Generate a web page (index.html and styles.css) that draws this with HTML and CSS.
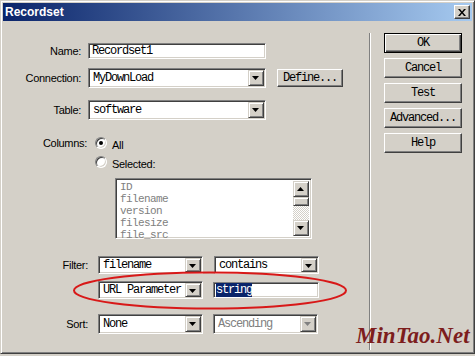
FILE: index.html
```html
<!DOCTYPE html>
<html lang="en">
<head>
    <meta charset="UTF-8">
    <title>Recordset</title>
    <link rel="stylesheet" href="styles.css">
</head>
<body>
    <div class="dialog">
        <div class="titlebar">
            <span class="title">Recordset</span>
            <span class="close">
                <svg width="8" height="7" viewBox="0 0 8 7"><path d="M0 0h2l2 2.5L6 0h2L5 3.5 8 7H6L4 4.5 2 7H0l3-3.5z" fill="#000"/></svg>
            </span>
        </div>

        <div class="content">
            <div class="main">
                <div class="row row-name">
                    <label class="lbl">Name:</label>
                    <div class="field text w-wide">Recordset1</div>
                </div>

                <div class="row row-conn">
                    <label class="lbl">Connection:</label>
                    <div class="field select w-wide">
                        <span class="select-text">MyDownLoad</span>
                        <span class="arrow"></span>
                    </div>
                    <button class="btn btn-define">Define...</button>
                </div>

                <div class="row row-table">
                    <label class="lbl">Table:</label>
                    <div class="field select w-wide">
                        <span class="select-text">software</span>
                        <span class="arrow"></span>
                    </div>
                </div>

                <div class="row row-cols">
                    <label class="lbl lbl-cols">Columns:</label>
                    <span class="radio checked"></span>
                    <span class="radio-text">All</span>
                </div>
                <div class="row row-sel">
                    <span class="radio"></span>
                    <span class="radio-text">Selected:</span>
                </div>

                <div class="field listbox">
                    <ul class="items">
                        <li>ID</li>
                        <li>filename</li>
                        <li>version</li>
                        <li>filesize</li>
                        <li>file_src</li>
                    </ul>
                    <div class="scrollbar">
                        <span class="sb-btn up"></span>
                        <span class="sb-thumb"></span>
                        <span class="sb-track"></span>
                        <span class="sb-btn down"></span>
                    </div>
                </div>

                <div class="row row-filter">
                    <label class="lbl lbl-low">Filter:</label>
                    <div class="field select w-small">
                        <span class="select-text">filename</span>
                        <span class="arrow"></span>
                    </div>
                    <div class="field select w-small gap">
                        <span class="select-text">contains</span>
                        <span class="arrow"></span>
                    </div>
                </div>

                <div class="row row-url">
                    <div class="field select w-small">
                        <span class="select-text">URL Parameter</span>
                        <span class="arrow"></span>
                    </div>
                    <div class="field text input-str">
                        <span class="hilite">string</span>
                    </div>
                </div>

                <div class="row row-sort">
                    <label class="lbl lbl-low">Sort:</label>
                    <div class="field select w-small">
                        <span class="select-text">None</span>
                        <span class="arrow"></span>
                    </div>
                    <div class="field select w-small gap-sm disabled">
                        <span class="select-text">Ascending</span>
                        <span class="arrow"></span>
                    </div>
                </div>
            </div>

            <div class="sep"></div>

            <div class="side">
                <button class="btn btn-side btn-default">OK</button>
                <button class="btn btn-side">Cancel</button>
                <button class="btn btn-side">Test</button>
                <button class="btn btn-side">Advanced...</button>
                <button class="btn btn-side">Help</button>
            </div>
        </div>

        <svg class="mark" width="475" height="356" viewBox="0 0 475 356">
            <ellipse cx="210" cy="290.5" rx="136" ry="18" fill="none" stroke="#d81818" stroke-width="2"/>
        </svg>
        <div class="watermark">MinTao.Net</div>
    </div>
</body>
</html>
```

FILE: styles.css
```css
/* base */
* {
    margin: 0;
    padding: 0;
    box-sizing: border-box;
}

body {
    background: #d4d0c8;
    font-family: 'Liberation Sans', Arial, sans-serif;
    font-size: 11px;
    letter-spacing: -0.3px;
    color: #000;
}

/* dialog frame */
.dialog {
    position: relative;
    width: 475px;
    height: 354px;
    padding: 2px;
    background: #d4d0c8;
    border: 1px solid;
    border-color: #d4d0c8 #404040 #404040 #d4d0c8;
    box-shadow: inset 1px 1px #fff, inset -1px -1px #808080;
    display: flex;
    flex-direction: column;
}

.titlebar {
    height: 18px;
    background: linear-gradient(to right, #0a246a, #a6caf0);
    display: flex;
    align-items: center;
    justify-content: space-between;
    padding: 0 2px;
}

.title {
    color: #fff;
    font-weight: bold;
    font-size: 12px;
    letter-spacing: 0;
}

.close {
    width: 16px;
    height: 14px;
    background: #d4d0c8;
    border: 1px solid;
    border-color: #fff #404040 #404040 #fff;
    box-shadow: inset -1px -1px #808080;
    display: flex;
    align-items: center;
    justify-content: center;
}

.content {
    flex: 1;
    display: flex;
}

/* left panel */
.main {
    width: 366px;
    padding-top: 22px;
}

.row {
    display: flex;
    align-items: center;
}

.lbl {
    width: 78px;
    margin-right: 7px;
    text-align: right;
}

.lbl-cols {
    width: 84px;
    margin-right: 8px;
}

.lbl-low {
    width: 85px;
    margin-right: 10px;
}

/* sunken fields */
.field {
    background: #fff;
    border: 1px solid;
    border-color: #808080 #fff #fff #808080;
    box-shadow: inset 1px 1px #404040, inset -1px -1px #d4d0c8;
    font-family: 'Liberation Mono', 'DejaVu Sans Mono', monospace;
    font-size: 12px;
    letter-spacing: -1.2px;
}

.text {
    display: flex;
    align-items: center;
    padding-left: 3px;
}

.select {
    display: flex;
    align-items: stretch;
    padding: 1px;
}

.select-text {
    flex: 1;
    display: flex;
    align-items: center;
    padding-left: 3px;
}

.arrow {
    position: relative;
    width: 16px;
    background: #d4d0c8;
    border: 1px solid;
    border-color: #d4d0c8 #404040 #404040 #d4d0c8;
    box-shadow: inset 1px 1px #fff, inset -1px -1px #808080;
}

.arrow::after {
    content: "";
    position: absolute;
    left: 3px;
    top: 5px;
    width: 7px;
    height: 4px;
    background: #000;
    clip-path: polygon(0 0, 100% 0, 50% 100%);
}

.disabled .select-text {
    color: #808080;
}

.disabled .arrow::after {
    background: #808080;
}

.w-wide {
    width: 178px;
}

.w-small {
    width: 105px;
}

.gap {
    margin-left: 11px;
}

.gap-sm {
    margin-left: 10px;
}

.row-name {
    height: 16px;
}

.row-name .field {
    height: 16px;
}

.row-conn {
    margin-top: 9px;
}

.row-conn .select,
.row-table .select,
.row-sort .select {
    height: 20px;
}

.row-table {
    margin-top: 12px;
}

/* buttons */
.btn {
    background: #d4d0c8;
    border: 1px solid;
    border-color: #fff #404040 #404040 #fff;
    box-shadow: inset -1px -1px #808080;
    font-family: 'Liberation Mono', 'DejaVu Sans Mono', monospace;
    font-size: 12px;
    letter-spacing: -1.2px;
    color: #000;
}

.btn-define {
    width: 66px;
    height: 18px;
    margin-left: 11px;
}

/* radios */
.row-cols {
    margin-top: 16px;
    height: 14px;
}

.row-sel {
    margin-top: 5px;
    margin-left: 92px;
    height: 14px;
}

.radio {
    position: relative;
    width: 12px;
    height: 12px;
    border-radius: 50%;
    background: #fff;
    border: 1px solid;
    border-color: #808080 #fff #fff #808080;
    box-shadow: inset 1px 1px #404040, inset -1px -1px #d4d0c8;
}

.checked::after {
    content: "";
    position: absolute;
    left: 3px;
    top: 3px;
    width: 4px;
    height: 4px;
    border-radius: 50%;
    background: #000;
}

.radio-text {
    margin-left: 5px;
    padding-top: 3px;
}

/* list box */
.listbox {
    margin-top: 9px;
    margin-left: 112px;
    width: 197px;
    height: 61px;
    display: flex;
    padding: 2px;
}

.items {
    flex: 1;
    list-style: none;
    color: #808080;
    padding-left: 2px;
    font-size: 11px;
    letter-spacing: -0.6px;
}

.items li {
    height: 12px;
    line-height: 12px;
}

.scrollbar {
    width: 16px;
    display: flex;
    flex-direction: column;
}

.sb-btn {
    position: relative;
    height: 16px;
    background: #d4d0c8;
    border: 1px solid;
    border-color: #d4d0c8 #404040 #404040 #d4d0c8;
    box-shadow: inset 1px 1px #fff, inset -1px -1px #808080;
}

.sb-btn::after {
    content: "";
    position: absolute;
    left: 3px;
    top: 5px;
    width: 7px;
    height: 4px;
    background: #000;
}

.up::after {
    clip-path: polygon(50% 0, 100% 100%, 0 100%);
}

.down::after {
    clip-path: polygon(0 0, 100% 0, 50% 100%);
}

.sb-thumb {
    height: 9px;
    background: #d4d0c8;
    border: 1px solid;
    border-color: #d4d0c8 #404040 #404040 #d4d0c8;
    box-shadow: inset 1px 1px #fff, inset -1px -1px #808080;
}

.sb-track {
    flex: 1;
    background: repeating-conic-gradient(#d4d0c8 0 25%, #fff 0 50%) 0 0 / 2px 2px;
}

/* filter + sort */
.row-filter {
    margin-top: 17px;
}

.row-filter .select,
.row-url .select {
    height: 18px;
}

.row-url {
    margin-top: 7px;
    margin-left: 95px;
}

.input-str {
    width: 106px;
    height: 16px;
    margin-left: 10px;
    padding-left: 2px;
}

.hilite {
    background: #0a246a;
    color: #fff;
}

.row-sort {
    margin-top: 15px;
}

/* separator + side buttons */
.sep {
    width: 2px;
    margin-top: 12px;
    margin-bottom: 1px;
    border-left: 1px solid #808080;
    border-right: 1px solid #fff;
}

.side {
    margin-left: 13px;
    padding-top: 12px;
    display: flex;
    flex-direction: column;
    gap: 5px;
}

.btn-side {
    width: 78px;
    height: 20px;
}

.btn-default {
    border: 1px solid #000;
    box-shadow: inset 1px 1px #fff, inset -1px -1px #404040, inset -2px -2px #808080;
}

/* overlays */
.mark {
    position: absolute;
    left: -1px;
    top: -1px;
    pointer-events: none;
}

.watermark {
    position: absolute;
    left: 355px;
    top: 322px;
    font-family: 'Liberation Serif', 'Times New Roman', serif;
    font-style: italic;
    font-weight: bold;
    font-size: 23px;
    letter-spacing: 0;
    color: #7d1d1d;
}
```
